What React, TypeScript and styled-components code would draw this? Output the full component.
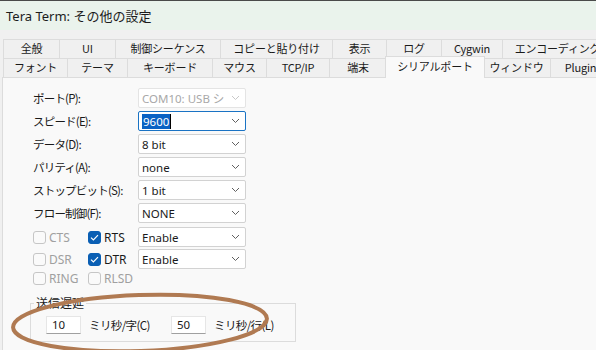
import React from "react";
import styled, { createGlobalStyle } from "styled-components";

const Global = createGlobalStyle`
  html, body { margin: 0; padding: 0; background: #f0f0f0; }
  body { width: 596px; height: 350px; overflow: hidden; }
`;

const FONT = `"Noto Sans", "Noto Sans CJK JP", sans-serif`;
const TABFONT = `"Noto Sans CJK JP", "Noto Sans", sans-serif`;

const Window = styled.div`
  position: relative;
  width: 596px;
  height: 350px;
  overflow: hidden;
  background: #f0f0f0;
  font-family: ${FONT};
  color: #1a1a1a;
`;

const TitleBar = styled.div`
  height: 29px;
  border-top: 1px solid #4a4a4a;
  background: #eaf3ec;
  display: flex;
  align-items: center;
  padding-left: 6px;
  font-size: 13px;
  color: #1c1c1c;
`;

const Body = styled.div`
  padding: 9px 0 0 3px;
`;

const TabRow = styled.div<{ $front?: boolean }>`
  display: flex;
  height: 19px;
  position: relative;
  z-index: ${(p) => (p.$front ? 2 : 1)};
`;

const Tab = styled.div<{ $w: number; $sel?: boolean; $first?: boolean }>`
  flex: 0 0 auto;
  width: ${(p) => p.$w}px;
  box-sizing: border-box;
  height: ${(p) => (p.$sel ? 22 : 19)}px;
  margin: ${(p) => (p.$sel ? "-2px -2px -1px -2px" : "0")};
  padding-top: ${(p) => (p.$sel ? 1 : 0)}px;
  border-top: 1px solid #dcdcdc;
  border-right: 1px solid #dcdcdc;
  border-left: ${(p) => (p.$first || p.$sel ? "1px solid #dcdcdc" : "none")};
  background: ${(p) => (p.$sel ? "#f9f9f9" : "#f0f0f0")};
  position: relative;
  z-index: ${(p) => (p.$sel ? 3 : 1)};
  font-family: ${TABFONT};
  font-size: 11px;
  letter-spacing: -0.2px;
  line-height: 17px;
  text-align: center;
  white-space: nowrap;
  overflow: hidden;
  color: #1a1a1a;
`;

const Panel = styled.div`
  margin-left: -1px;
  height: 280px;
  background: #f9f9f9;
  border-left: 1px solid #dcdcdc;
  border-top: 1px solid #dcdcdc;
  padding: 10px 0 0 30px;
  box-sizing: border-box;
  position: relative;
  z-index: 1;
`;

const FormGrid = styled.div`
  display: grid;
  grid-template-columns: 105px 108px;
  grid-auto-rows: 20px;
  row-gap: 3px;
  align-items: center;
`;

const Label = styled.div`
  font-family: ${TABFONT};
  font-size: 11.5px;
  letter-spacing: -0.8px;
  color: #1a1a1a;
  white-space: nowrap;
`;

const Combo = styled.div<{ $focus?: boolean; $disabled?: boolean }>`
  height: 20px;
  box-sizing: border-box;
  border: 1px solid ${(p) => (p.$focus ? "#1a73c4" : p.$disabled ? "#e4e4e4" : "#d2d2d2")};
  border-radius: 2px;
  background: #ffffff;
  display: flex;
  align-items: center;
  padding-left: 3px;
  font-family: ${FONT};
  font-size: 11.5px;
  color: ${(p) => (p.$disabled ? "#a8a8a8" : "#1a1a1a")};
  position: relative;
  white-space: nowrap;
  overflow: hidden;
`;

const ComboText = styled.span`
  flex: 1;
  overflow: hidden;
`;

const Selected = styled.span`
  background: #0a62c4;
  color: #fff;
  padding: 0 1px;
  line-height: 14px;
  border-right: 1px solid #000;
`;

const ChevronBox = styled.span`
  width: 20px;
  display: flex;
  justify-content: center;
  align-items: center;
  flex: 0 0 auto;
`;

const Chevron: React.FC<{ dim?: boolean }> = ({ dim }) => (
  <ChevronBox>
    <svg width="9" height="6" viewBox="0 0 9 6">
      <path d="M1 1 L4.5 4.5 L8 1" fill="none" stroke={dim ? "#c8c8c8" : "#606060"} strokeWidth="1" />
    </svg>
  </ChevronBox>
);

const CheckRows = styled.div`
  margin-top: 4px;
  display: grid;
  grid-template-columns: 55px 50px 108px;
  grid-template-rows: 20px 20px 14px;
  row-gap: 2px;
  align-items: center;
`;

const CheckItem = styled.label<{ $disabled?: boolean }>`
  display: flex;
  align-items: center;
  gap: 3px;
  font-family: ${FONT};
  font-size: 12px;
  color: ${(p) => (p.$disabled ? "#a0a0a0" : "#1a1a1a")};
`;

const Box = styled.span<{ $checked?: boolean }>`
  width: 13px;
  height: 13px;
  box-sizing: border-box;
  border-radius: 3px;
  border: 1px solid ${(p) => (p.$checked ? "#0a5fb4" : "#c6c6c6")};
  background: ${(p) => (p.$checked ? "#0a5fb4" : "#fafafa")};
  display: flex;
  align-items: center;
  justify-content: center;
`;

const Check: React.FC<{ checked?: boolean; disabled?: boolean; label: string }> = ({ checked, disabled, label }) => (
  <CheckItem $disabled={disabled}>
    <Box $checked={checked}>
      {checked && (
        <svg width="9" height="7" viewBox="0 0 9 7">
          <path d="M1 3.6 L3.4 6 L8 1.2" fill="none" stroke="#fff" strokeWidth="1.2" />
        </svg>
      )}
    </Box>
    {label}
  </CheckItem>
);

const Group = styled.div`
  position: relative;
  margin: 18px 0 0 -3px;
  width: 266px;
  height: 39px;
  box-sizing: border-box;
  border: 1px solid #dcdcdc;
  padding: 4px 0 0 15px;
  display: flex;
  align-items: center;
  gap: 8px;
`;

const Legend = styled.span`
  position: absolute;
  left: 3px;
  top: -9px;
  padding: 0 2px;
  background: #f9f9f9;
  font-family: ${TABFONT};
  font-size: 12px;
  line-height: 16px;
  color: #1a1a1a;
`;

const NumBox = styled.div`
  width: 35px;
  height: 18px;
  box-sizing: border-box;
  background: #fff;
  border: 1px solid #e6e6e6;
  border-bottom: 1px solid #a0a0a0;
  font-family: ${FONT};
  font-size: 11.5px;
  line-height: 16px;
  padding-left: 5px;
`;

const Unit = styled.span<{ $w: number }>`
  width: ${(p) => p.$w}px;
  font-family: ${TABFONT};
  font-size: 11.5px;
  letter-spacing: -0.6px;
  color: #1a1a1a;
  white-space: nowrap;
`;

const Overlay = styled.svg`
  position: absolute;
  left: 0;
  top: 280px;
  pointer-events: none;
  z-index: 5;
`;

const row1 = [
  ["全般", 57],
  ["UI", 56],
  ["制御シーケンス", 105],
  ["コピーと貼り付け", 112],
  ["表示", 54],
  ["ログ", 55],
  ["Cygwin", 61],
  ["エンコーディング", 110],
] as const;

const row2 = [
  ["フォント", 65],
  ["テーマ", 60],
  ["キーボード", 85],
  ["マウス", 54],
  ["TCP/IP", 63],
  ["端末", 57],
  ["シリアルポート", 100],
  ["ウィンドウ", 68],
  ["Plugin", 60],
] as const;

const fields: { label: string; value: string; focus?: boolean; disabled?: boolean }[] = [
  { label: "ポート(P):", value: "COM10: USB シリアル", disabled: true },
  { label: "スピード(E):", value: "9600", focus: true },
  { label: "データ(D):", value: "8 bit" },
  { label: "パリティ(A):", value: "none" },
  { label: "ストップビット(S):", value: "1 bit" },
  { label: "フロー制御(F):", value: "NONE" },
];

export default function App() {
  return (
    <Window>
      <Global />
      <TitleBar>Tera Term: その他の設定</TitleBar>
      <Body>
        <TabRow>
          {row1.map(([t, w], i) => (
            <Tab key={t} $w={w} $first={i === 0}>
              {t}
            </Tab>
          ))}
        </TabRow>
        <TabRow $front>
          {row2.map(([t, w], i) => (
            <Tab key={t} $w={w} $first={i === 0} $sel={t === "シリアルポート"}>
              {t}
            </Tab>
          ))}
        </TabRow>
        <Panel>
          <FormGrid>
            {fields.map((f) => (
              <React.Fragment key={f.label}>
                <Label>{f.label}</Label>
                <Combo $focus={f.focus} $disabled={f.disabled}>
                  <ComboText>{f.focus ? <Selected>{f.value}</Selected> : f.value}</ComboText>
                  <Chevron dim={f.disabled} />
                </Combo>
              </React.Fragment>
            ))}
          </FormGrid>
          <CheckRows>
            <Check disabled label="CTS" />
            <Check checked label="RTS" />
            <Combo>
              <ComboText>Enable</ComboText>
              <Chevron />
            </Combo>
            <Check disabled label="DSR" />
            <Check checked label="DTR" />
            <Combo>
              <ComboText>Enable</ComboText>
              <Chevron />
            </Combo>
            <Check disabled label="RING" />
            <Check disabled label="RLSD" />
          </CheckRows>
          <Group>
            <Legend>送信遅延</Legend>
            <NumBox>10</NumBox>
            <Unit $w={74}>ミリ秒/字(C)</Unit>
            <NumBox>50</NumBox>
            <Unit $w={80}>ミリ秒/行(L)</Unit>
          </Group>
        </Panel>
      </Body>
      <Overlay width="300" height="70" viewBox="0 0 300 70">
        <ellipse
          cx="140"
          cy="43"
          rx="127"
          ry="28"
          transform="rotate(-2 140 43)"
          fill="none"
          stroke="#b07a52"
          strokeWidth="4"
        />
      </Overlay>
    </Window>
  );
}
